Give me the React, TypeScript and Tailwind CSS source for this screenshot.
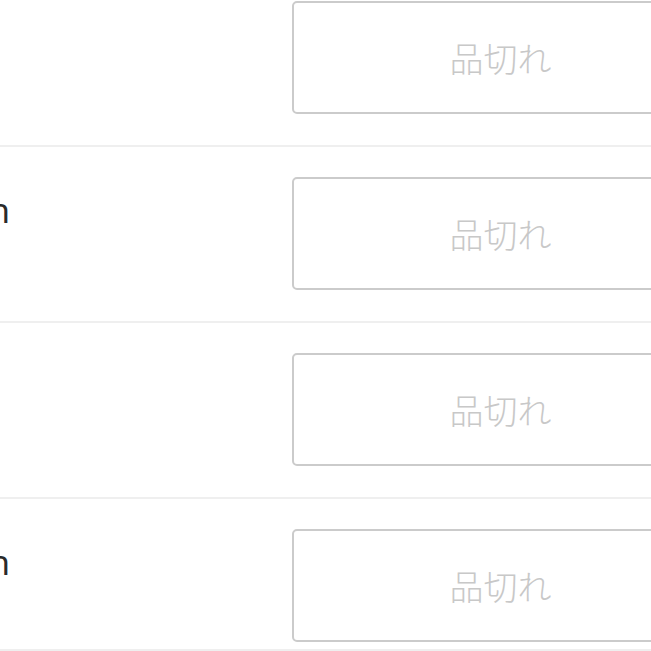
import React from "react";

const rows = [
  { label: "", pb: "pb-[31px]" },
  { label: "n", pb: "pb-[31px]" },
  { label: "", pb: "pb-[31px]" },
  { label: "n", pb: "pb-[7px]" },
];

export default function App() {
  return (
    <div
      className="w-[651px] h-[651px] overflow-hidden bg-white"
      style={{ fontFamily: '"Noto Sans", "Noto Sans CJK JP", sans-serif' }}
    >
      <div className="-mt-[29px]">
        {rows.map((r, i) => (
          <div
            key={i}
            className={`flex items-start pt-[30px] ${r.pb} border-b-2 border-[#efefef]`}
          >
            <div className="w-[292px] shrink-0 pt-[13px] overflow-hidden">
              <div className="-ml-[11px] text-[34px] leading-[1.2] text-[#2a2a2a]">
                {r.label || "\u00a0"}
              </div>
            </div>
            <div className="shrink-0 w-[417px] h-[113px] border-2 border-[#cbcbcb] rounded-[5px] bg-white flex items-center justify-center">
              <span
                className="text-[34px] text-[#c8c8c8] leading-none"
                style={{ fontFamily: '"Noto Sans CJK JP", sans-serif', fontWeight: 300 }}
              >
                品切れ
              </span>
            </div>
          </div>
        ))}
      </div>
    </div>
  );
}
